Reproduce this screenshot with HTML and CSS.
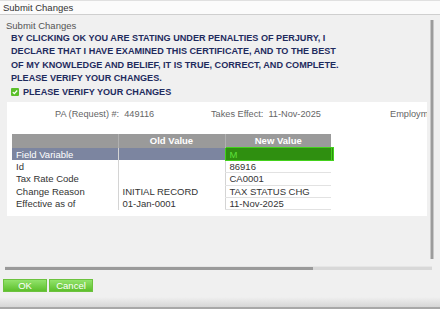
FILE: index.html
```html
<!DOCTYPE html>
<html>
<head>
<meta charset="utf-8">
<link rel="stylesheet" href="styles.css">
</head>
<body>
<div class="window">
  <div class="titlebar">Submit Changes</div>
  <div class="dialog">
    <div class="scrollarea">
      <div class="viewport">
        <div class="content">
          <div class="subtitle">Submit Changes</div>
          <div class="declaration">
            <p>BY CLICKING OK YOU ARE STATING UNDER PENALTIES OF PERJURY, I</p>
            <p>DECLARE THAT I HAVE EXAMINED THIS CERTIFICATE, AND TO THE BEST</p>
            <p>OF MY KNOWLEDGE AND BELIEF, IT IS TRUE, CORRECT, AND COMPLETE.</p>
            <p>PLEASE VERIFY YOUR CHANGES.</p>
            <p class="check-line"><span class="checkbox"><svg width="8" height="8" viewBox="0 0 8 8"><rect width="8" height="8" rx="1" fill="#5cbf2a"/><path d="M1.8 4.1 L3.3 5.6 L6.2 2.5" stroke="#fff" stroke-width="1.3" fill="none"/></svg></span>PLEASE VERIFY YOUR CHANGES</p>
          </div>
          <div class="panel">
            <div class="info">
              <span class="info-item pa"><span class="lbl">PA (Request) #:</span><span class="val">449116</span></span>
              <span class="info-item te"><span class="lbl">Takes Effect:</span><span class="val">11-Nov-2025</span></span>
              <span class="info-item em"><span class="lbl">Employment</span></span>
            </div>
            <table class="changes">
              <thead>
                <tr><th class="c1"></th><th class="c2">Old Value</th><th class="c3">New Value</th></tr>
              </thead>
              <tbody>
                <tr class="sel"><td class="c1">Field Variable</td><td class="c2"></td><td class="c3 new">M</td></tr>
                <tr><td class="c1">Id</td><td class="c2"></td><td class="c3">86916</td></tr>
                <tr><td class="c1">Tax Rate Code</td><td class="c2"></td><td class="c3">CA0001</td></tr>
                <tr><td class="c1">Change Reason</td><td class="c2">INITIAL RECORD</td><td class="c3">TAX STATUS CHG</td></tr>
                <tr><td class="c1">Effective as of</td><td class="c2">01-Jan-0001</td><td class="c3">11-Nov-2025</td></tr>
              </tbody>
            </table>
          </div>
        </div>
        <div class="vscroll"><div class="vthumb"></div></div>
      </div>
      <div class="hscroll"><div class="hthumb"></div></div>
    </div>
    <div class="buttons">
      <button class="btn">OK</button>
      <button class="btn">Cancel</button>
    </div>
  </div>
  <div class="footer"></div>
</div>
</body>
</html>
```
FILE: styles.css
```css
* { box-sizing: border-box; }
html, body { margin: 0; padding: 0; }
body {
  width: 440px;
  height: 309px;
  overflow: hidden;
  background: #f0f0f0;
  font-family: "Liberation Sans", Arial, sans-serif;
  font-size: 10px;
  color: #333;
}
.window { display: flex; flex-direction: column; height: 309px; }
.titlebar {
  height: 15px;
  line-height: 14px;
  padding-left: 3px;
  background: #fbfbfb;
  border-top: 1px solid #e0e0e0;
  border-bottom: 1px solid #cfcfcf;
  color: #333;
  font-size: 9.5px;
}
.dialog {
  flex: 1;
  display: flex;
  flex-direction: column;
  background: #f0f0f0;
}
.scrollarea {
  margin: 3px 6px 0 5px;
  height: 252px;
  display: flex;
  flex-direction: column;
}
.viewport {
  flex: 1;
  display: flex;
  min-height: 0;
}
.content {
  flex: 1;
  overflow: hidden;
  min-width: 0;
}
.subtitle {
  padding: 2px 0 0 1px;
  height: 14px;
  line-height: 12px;
  color: #555;
  font-size: 9.5px;
}
.declaration {
  padding: 0 0 0 6px;
  color: #1f2b5e;
  font-weight: bold;
  font-size: 9.1px;
}
.declaration p {
  margin: 0;
  height: 13.4px;
  line-height: 13.4px;
  white-space: nowrap;
}
.check-line { display: flex; align-items: center; }
.checkbox { display: inline-flex; margin-right: 4px; }
.panel {
  margin: 3px 0 0 2px;
  background: #fff;
  height: 114px;
  padding-top: 6px;
  width: 600px;
}
.info {
  display: flex;
  height: 13px;
  line-height: 13px;
  color: #666;
  font-size: 9.2px;
  white-space: nowrap;
}
.info-item .lbl { margin-right: 5px; }
.pa { margin-left: 48px; width: 156px; }
.te { width: 179px; }
.changes {
  margin: 13px 0 0 5px;
  border-collapse: collapse;
  font-size: 9.5px;
}
.changes th {
  background: #9a9a9a;
  color: #fff;
  font-weight: bold;
  height: 14px;
  padding: 0;
  text-align: center;
}
.changes td {
  height: 12.4px;
  padding: 0 0 0 4px;
  white-space: nowrap;
  color: #333;
}
.c1 { width: 106px; }
.c2 { width: 107px; border-left: 1px solid #d4d4d4; }
.c3 { width: 106px; border-left: 1px solid #d4d4d4; }
.changes th.c2, .changes th.c3 { border-left: 1px solid #b0b0b0; }
.changes tbody td.c3 { border-bottom: 1px solid #e2e2e2; }
.changes tr.sel td {
  background: #7c85a0;
  color: #fff;
}
.changes tr.sel td.new {
  background: #2f8f10;
  color: #5fe03a;
  border: 1px solid #43d21c;
  box-shadow: 2px 0 0 0 #2f8f10, 3px 0 0 0 #43d21c, 3px -1px 0 0 #43d21c, 3px 1px 0 0 #43d21c;
}
.vscroll {
  width: 4px;
  margin-left: 3px;
  padding-top: 2px;
  display: flex;
}
.vthumb {
  flex: 1;
  margin-bottom: 4px;
  background: #9c9c9c;
  border-left: 1px solid #c8c8c8;
  border-right: 1px solid #c8c8c8;
}
.hscroll {
  height: 4px;
  margin-top: 3px;
  background: #d8d8d8;
  border-top: 1px solid #e6e6e6;
  margin-right: 2px;
}
.hthumb {
  width: 308px;
  height: 3px;
  background: #9a9a9a;
}
.buttons {
  display: flex;
  gap: 2px;
  padding: 9px 0 0 3px;
}
.btn {
  width: 44px;
  height: 13px;
  padding: 0;
  border: 1px solid #6cc23e;
  background: linear-gradient(#92e36b, #5dbf2c);
  color: #fff;
  font-family: inherit;
  font-size: 9.5px;
  line-height: 11px;
}
.footer {
  height: 12px;
  background: linear-gradient(#f0f0f0, #d6d6d6);
  border-bottom: 2px solid #a8a8a8;
}
```
